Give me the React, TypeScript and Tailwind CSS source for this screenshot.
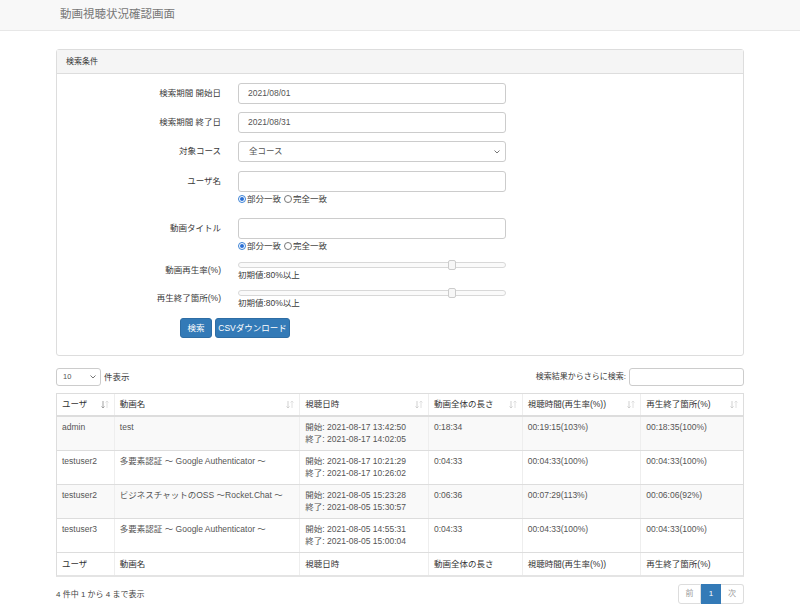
import React from "react";

const font = { fontFamily: '"Liberation Sans", "Noto Sans CJK JP", sans-serif' };

function SortIcon({ active = false }: { active?: boolean }) {
  return (
    <svg width="8" height="9" viewBox="0 0 8 9" className="shrink-0">
      <path d="M2 1 V8 M0.5 6.5 L2 8 L3.5 6.5" stroke={active ? "#999" : "#ccc"} strokeWidth="0.9" fill="none" />
      <path d="M6 8 V1 M4.5 2.5 L6 1 L7.5 2.5" stroke="#ddd" strokeWidth="0.9" fill="none" />
    </svg>
  );
}

function Radio({ checked }: { checked?: boolean }) {
  return (
    <span className={`inline-flex items-center justify-center w-[8px] h-[8px] rounded-full border bg-white mr-[1px] ${checked ? "border-[#3b82d6]" : "border-[#777]"}`}>
      {checked && <span className="w-[4px] h-[4px] rounded-full bg-[#2a6fd6]" />}
    </span>
  );
}

function Row({ label, children }: { label: string; children: React.ReactNode }) {
  return (
    <div className="flex items-center">
      <div className="w-[164px] text-right text-[8.5px] text-[#3a3a3a]">{label}</div>
      <div className="ml-[17px] w-[268px]">{children}</div>
    </div>
  );
}

function Input({ value }: { value?: string }) {
  return (
    <div className="h-[21px] w-[268px] border border-[#ccc] rounded-[3px] bg-white flex items-center px-[9px] text-[8.5px] text-[#555]">
      {value}
    </div>
  );
}

function Slider() {
  return (
    <div className="relative h-[10px] w-[268px] flex items-center">
      <div className="h-[6px] w-full border border-[#d8d8d8] rounded-[3px] bg-[#fafafa]" />
      <div className="absolute left-[210px] top-0 h-[10px] w-[8px] border border-[#ccc] rounded-[2px] bg-[#f7f7f7]" />
    </div>
  );
}

function MatchRadios() {
  return (
    <div className="flex items-center text-[8.5px] text-[#3a3a3a] mt-[2px] h-[10px]">
      <Radio checked />
      <span>部分一致</span>
      <span className="ml-[3px]" />
      <Radio />
      <span>完全一致</span>
    </div>
  );
}

const cols = [57, 186, 129, 94, 119, 103];
const heads = ["ユーザ", "動画名", "視聴日時", "動画全体の長さ", "視聴時間(再生率(%))", "再生終了箇所(%)"];

const rows = [
  ["admin", "test", ["開始: 2021-08-17 13:42:50", "終了: 2021-08-17 14:02:05"], "0:18:34", "00:19:15(103%)", "00:18:35(100%)"],
  ["testuser2", "多要素認証 ～ Google Authenticator ～", ["開始: 2021-08-17 10:21:29", "終了: 2021-08-17 10:26:02"], "0:04:33", "00:04:33(100%)", "00:04:33(100%)"],
  ["testuser2", "ビジネスチャットのOSS ～Rocket.Chat ～", ["開始: 2021-08-05 15:23:28", "終了: 2021-08-05 15:30:57"], "0:06:36", "00:07:29(113%)", "00:06:06(92%)"],
  ["testuser3", "多要素認証 ～ Google Authenticator ～", ["開始: 2021-08-05 14:55:31", "終了: 2021-08-05 15:00:04"], "0:04:33", "00:04:33(100%)", "00:04:33(100%)"],
] as const;

export default function App() {
  return (
    <div className="w-[800px] h-[612px] bg-white overflow-hidden" style={font}>
      <div className="h-[31px] bg-[#f8f8f8] border-b border-[#e7e7e7] flex items-center pl-[60px]">
        <span className="text-[11.5px] text-[#777]">動画視聴状況確認画面</span>
      </div>

      <div className="ml-[56px] w-[688px] mt-[18px]">
        <div className="border border-[#ddd] rounded-[3px]">
          <div className="h-[24px] bg-[#f5f5f5] border-b border-[#ddd] flex items-center pl-[9px] text-[8px] text-[#333]">
            検索条件
          </div>
          <div className="pt-[9px] pb-[17px] flex flex-col">
            <Row label="検索期間 開始日"><Input value="2021/08/01" /></Row>
            <div className="h-[8px]" />
            <Row label="検索期間 終了日"><Input value="2021/08/31" /></Row>
            <div className="h-[8px]" />
            <Row label="対象コース">
              <div className="h-[21px] w-[268px] border border-[#ccc] rounded-[3px] bg-white flex items-center justify-between pl-[10px] pr-[5px] text-[8.5px] text-[#555]">
                <span>全コース</span>
                <svg width="6" height="4" viewBox="0 0 6 4"><path d="M0.5 0.5 L3 3 L5.5 0.5" stroke="#666" strokeWidth="0.9" fill="none" /></svg>
              </div>
            </Row>
            <div className="h-[9px]" />
            <div className="flex">
              <div className="w-[164px] text-right text-[8.5px] text-[#3a3a3a] h-[21px] flex items-center justify-end">ユーザ名</div>
              <div className="ml-[17px]">
                <Input />
                <MatchRadios />
              </div>
            </div>
            <div className="h-[14px]" />
            <div className="flex">
              <div className="w-[164px] text-right text-[8.5px] text-[#3a3a3a] h-[21px] flex items-center justify-end">動画タイトル</div>
              <div className="ml-[17px]">
                <Input />
                <MatchRadios />
              </div>
            </div>
            <div className="h-[9px]" />
            <Row label="動画再生率(%)">
              <Slider />
              <div className="text-[8.5px] text-[#3a3a3a] leading-[10px]">初期値:80%以上</div>
            </Row>
            <div className="h-[8px]" />
            <Row label="再生終了箇所(%)">
              <Slider />
              <div className="text-[8.5px] text-[#3a3a3a] leading-[10px]">初期値:80%以上</div>
            </Row>
            <div className="flex gap-[3px] pl-[123px] mt-[10px]">
              <div className="h-[20px] w-[32px] rounded-[3px] bg-[#337ab7] border border-[#2e6da4] text-white text-[8.5px] flex items-center justify-center">検索</div>
              <div className="h-[20px] w-[75px] rounded-[3px] bg-[#337ab7] border border-[#2e6da4] text-white text-[8.5px] flex items-center justify-center">CSVダウンロード</div>
            </div>
          </div>
        </div>

        <div className="mt-[12px] flex items-center justify-between h-[18px]">
          <div className="flex items-center">
            <div className="h-[18px] w-[45px] border border-[#ccc] rounded-[3px] flex items-center justify-between pl-[6px] pr-[4px] text-[7.5px] text-[#555]">
              <span>10</span>
              <svg width="6" height="4" viewBox="0 0 6 4"><path d="M0.5 0.5 L3 3 L5.5 0.5" stroke="#666" strokeWidth="0.9" fill="none" /></svg>
            </div>
            <span className="ml-[3px] text-[8.5px] text-[#3a3a3a]">件表示</span>
          </div>
          <div className="flex items-center">
            <span className="text-[8px] text-[#3a3a3a] mr-[3px]">検索結果からさらに検索:</span>
            <div className="h-[18px] w-[115px] border border-[#ccc] rounded-[3px] bg-white" />
          </div>
        </div>

        <div className="mt-[7px] border border-[#ddd] border-b-2 border-b-[#e4e4e4]">
          <div className="flex h-[23px] border-b-2 border-[#ddd]">
            {heads.map((h, i) => (
              <div
                key={h}
                style={{ width: cols[i] }}
                className={`flex items-center justify-between pl-[5px] pr-[5px] text-[8.5px] text-[#333] ${i > 0 ? "border-l border-[#eee]" : ""}`}
              >
                <span>{h}</span>
                <SortIcon active={i === 0} />
              </div>
            ))}
          </div>
          {rows.map((r, ri) => (
            <div key={ri} className={`flex h-[34px] border-b border-[#ddd] ${ri % 2 === 0 ? "bg-[#f9f9f9]" : "bg-white"}`}>
              {r.map((c, i) => (
                <div
                  key={i}
                  style={{ width: cols[i] }}
                  className={`pl-[5px] pt-[4px] text-[8.5px] text-[#555] leading-[12px] ${i > 0 ? "border-l border-[#eee]" : ""}`}
                >
                  {Array.isArray(c) ? (
                    <>
                      <div>{c[0]}</div>
                      <div>{c[1]}</div>
                    </>
                  ) : (
                    c
                  )}
                </div>
              ))}
            </div>
          ))}
          <div className="flex h-[22px]">
            {heads.map((h, i) => (
              <div
                key={h}
                style={{ width: cols[i] }}
                className={`flex items-center pl-[5px] text-[8.5px] text-[#333] ${i > 0 ? "border-l border-[#eee]" : ""}`}
              >
                {h}
              </div>
            ))}
          </div>
        </div>

        <div className="mt-[4px] flex items-start justify-between">
          <span className="mt-[8px] text-[8px] text-[#444]">4 件中 1 から 4 まで表示</span>
          <div className="flex mt-[3px] h-[20px] text-[8px]">
            <div className="w-[23px] border border-[#ddd] rounded-l-[3px] flex items-center justify-center text-[#999]">前</div>
            <div className="w-[20px] bg-[#337ab7] border border-[#337ab7] flex items-center justify-center text-white">1</div>
            <div className="w-[23px] border border-[#ddd] border-l-0 rounded-r-[3px] flex items-center justify-center text-[#999]">次</div>
          </div>
        </div>
      </div>
    </div>
  );
}
